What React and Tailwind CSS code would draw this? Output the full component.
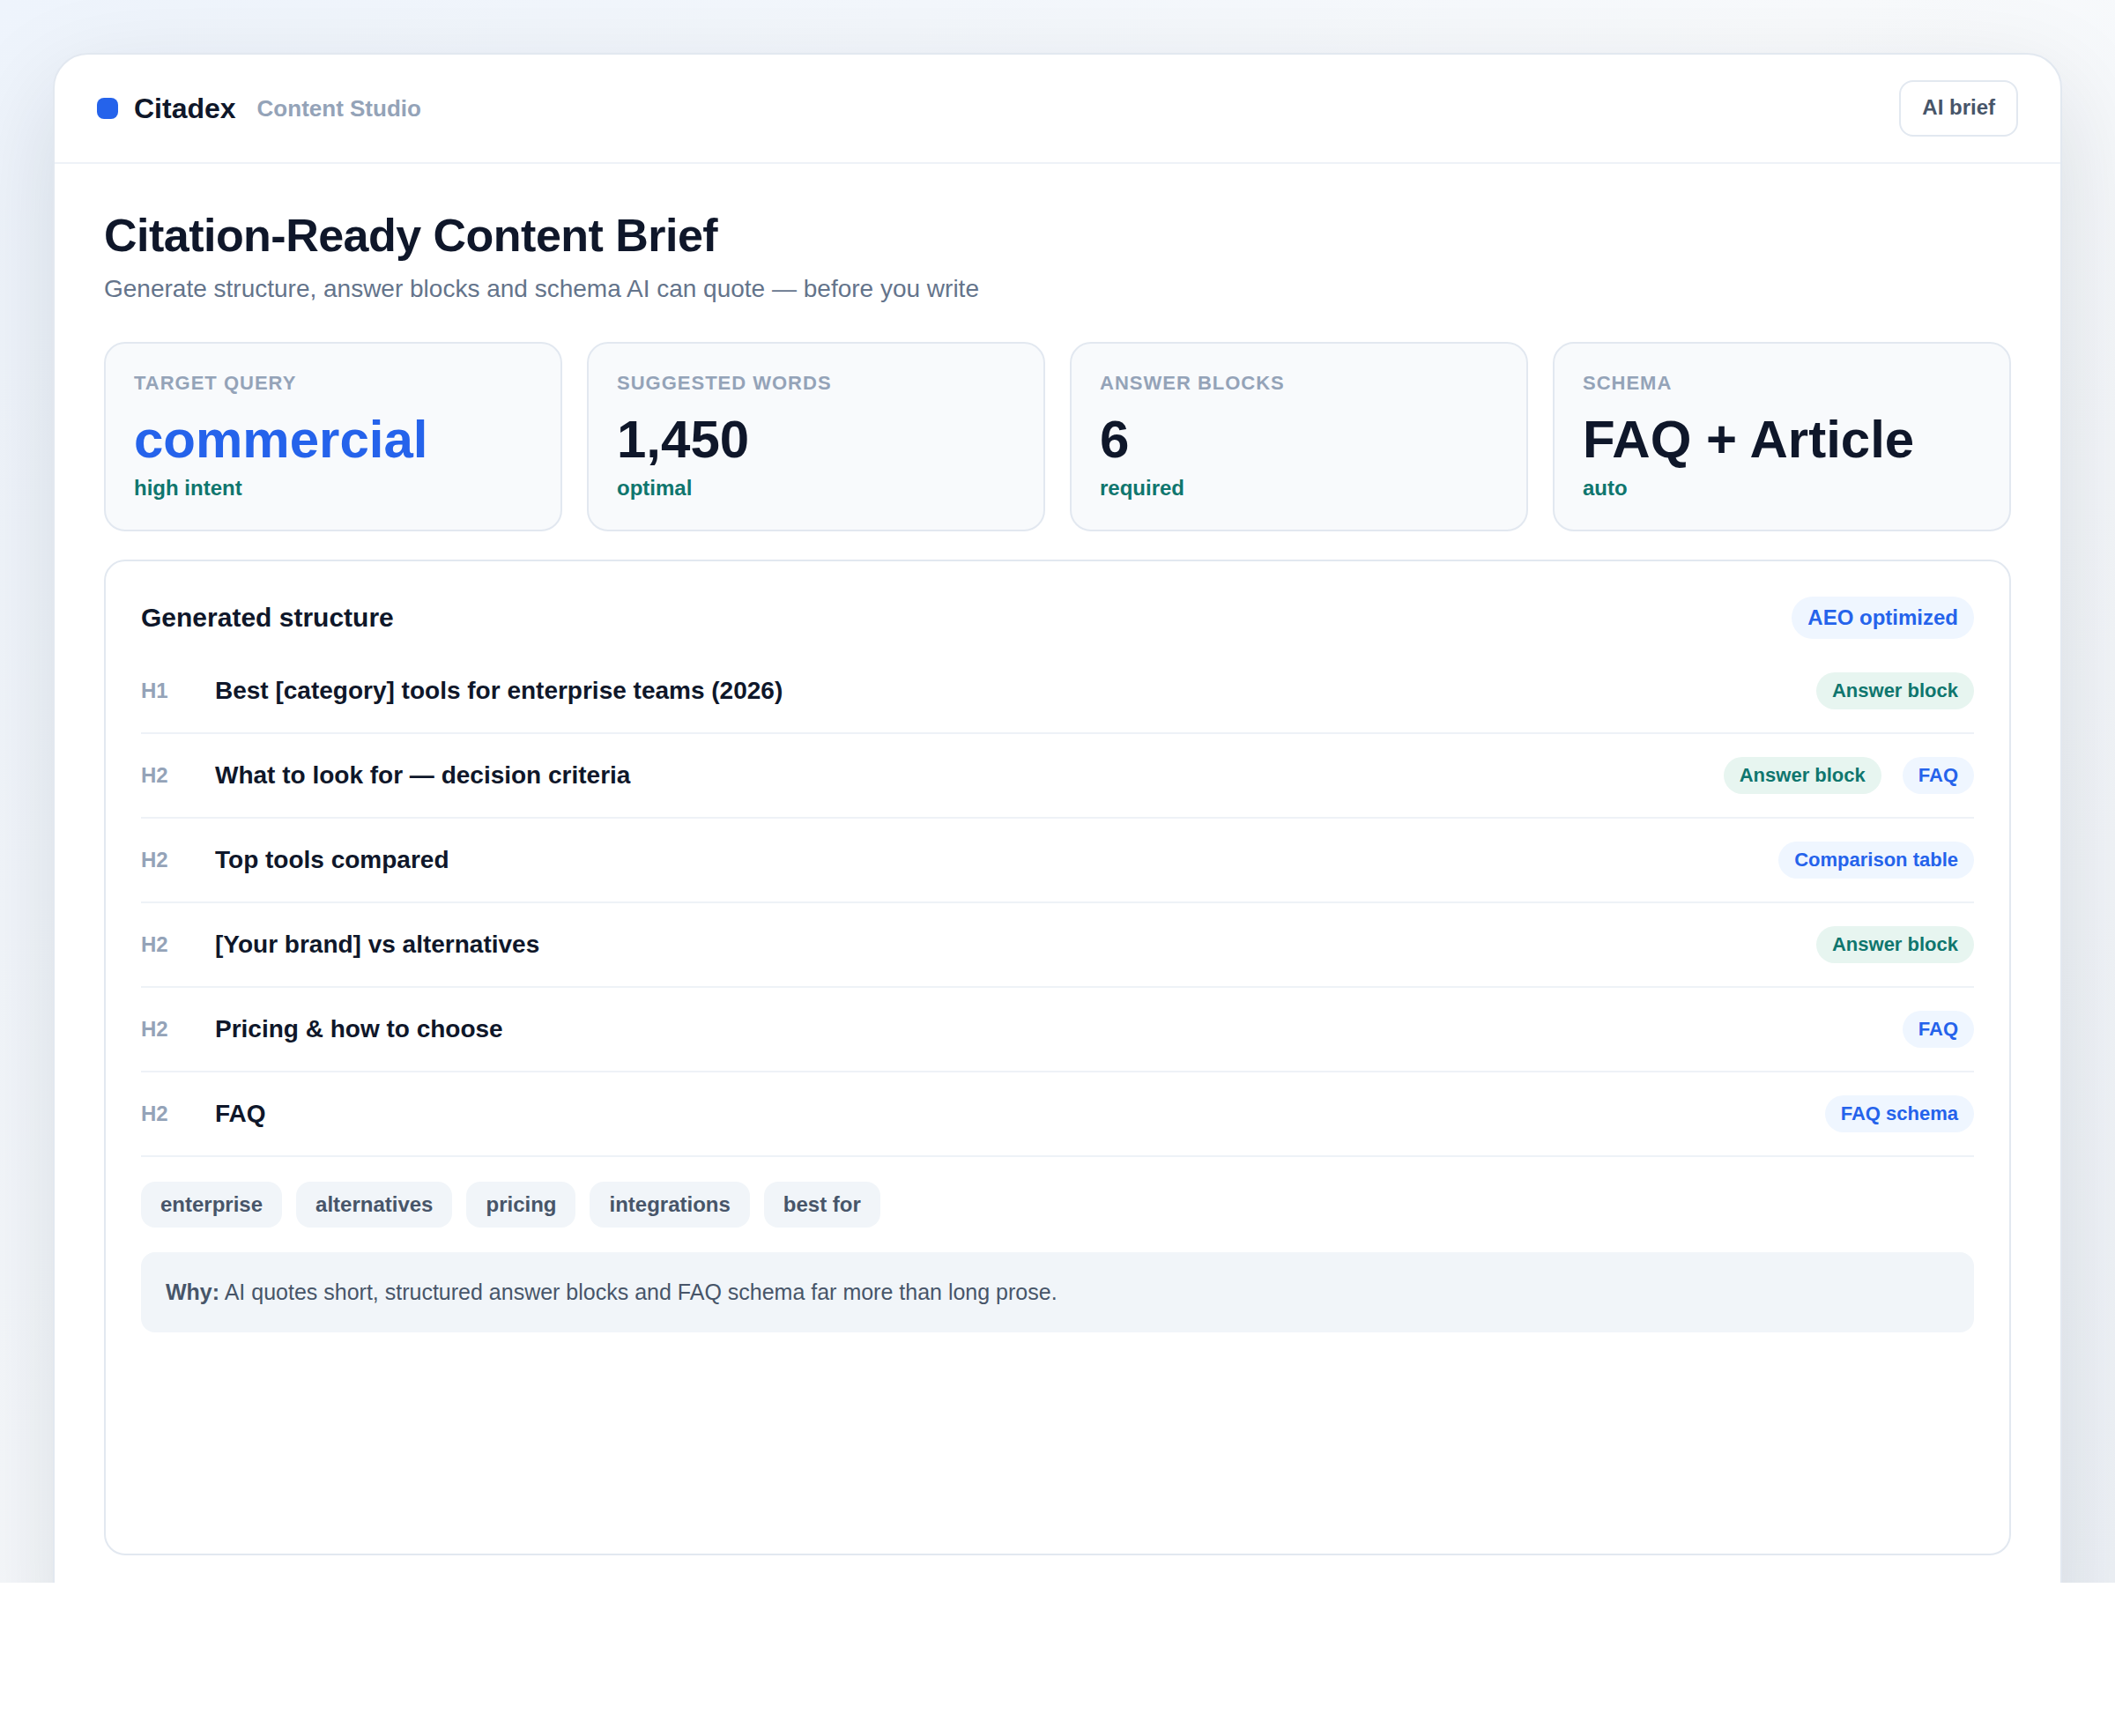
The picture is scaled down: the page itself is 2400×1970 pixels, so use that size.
const stats = [
    { label: "Target query", value: "commercial", note: "high intent", accent: true },
    { label: "Suggested words", value: "1,450", note: "optimal" },
    { label: "Answer blocks", value: "6", note: "required" },
    { label: "Schema", value: "FAQ + Article", note: "auto" },
];

const outline = [
    { level: "H1", title: "Best [category] tools for enterprise teams (2026)", tags: ["Answer block"] },
    { level: "H2", title: "What to look for — decision criteria", tags: ["Answer block", "FAQ"] },
    { level: "H2", title: "Top tools compared", tags: ["Comparison table"] },
    { level: "H2", title: "[Your brand] vs alternatives", tags: ["Answer block"] },
    { level: "H2", title: "Pricing & how to choose", tags: ["FAQ"] },
    { level: "H2", title: "FAQ", tags: ["FAQ schema"] },
];

const keywords = ["enterprise", "alternatives", "pricing", "integrations", "best for"];

const Header = () => (
    <header className="flex items-center justify-between px-12 py-[29px] border-b-2 border-[#eef2f7]">
        <div className="flex items-center">
            <span className="w-6 h-6 mr-[18px] rounded-lg bg-[#2563eb]" />
            <span className="text-[32px] leading-10 font-bold">Citadex</span>
            <span className="ml-6 text-[26px] leading-10 font-bold text-[#94a3b8]">Content Studio</span>
        </div>
        <button className="h-16 px-6 pb-0.5 border-2 border-[#e2e8f0] rounded-2xl text-2xl font-bold text-[#475569]">
            AI brief
        </button>
    </header>
);

const StatCard = ({ label, value, note, accent }) => (
    <div className="px-8 pt-7 pb-[29px] bg-[#f8fafc] border-2 border-[#e2e8f0] rounded-3xl">
        <div className="text-[22px] leading-[33px] font-bold uppercase tracking-[1px] text-[#94a3b8]">
            {label}
        </div>
        <div className={`mt-[13px] mb-0.5 text-[60px] leading-[70px] font-bold ${accent ? "text-[#2563eb]" : "text-[#0f172a]"}`}>
            {value}
        </div>
        <div className="text-2xl leading-9 font-bold text-[#0f766e]">{note}</div>
    </div>
);

const Tag = ({ children }) => (
    <span
        className={`px-[18px] rounded-full text-[22px] leading-[42px] font-bold whitespace-nowrap ${
            children === "Answer block" ? "bg-[#e7f5f0] text-[#0f766e]" : "bg-[#eff6ff] text-[#2563eb]"
        }`}
    >
        {children}
    </span>
);

const App = () => {
    return (
        <div className="overflow-hidden px-15 pt-15 bg-[linear-gradient(135deg,#eef4fc_0%,#f8fafc_50%,#eef2f7_100%)] font-['Liberation_Sans',Arial,sans-serif] text-[#0f172a]">
            {/* The window runs past the bottom edge and is cut off there */}
            <div className="-mb-20 pb-[109px] bg-white border-2 border-[#e2e8f0] rounded-[40px] shadow-[0_40px_120px_rgba(15,23,42,0.13)]">
                <Header />

                <main className="px-14 pt-12">
                    <h1 className="text-[52px] leading-[66px] font-bold tracking-[-0.01em]">
                        Citation-Ready Content Brief
                    </h1>
                    <p className="mt-[7px] text-[28px] leading-[42px] text-[#64748b]">
                        Generate structure, answer blocks and schema AI can quote — before you write
                    </p>

                    <div className="grid grid-cols-4 gap-7 mt-[39px]">
                        {stats.map((stat) => (
                            <StatCard key={stat.label} {...stat} />
                        ))}
                    </div>

                    <section className="mt-8 p-10 min-h-[1130px] border-2 border-[#e2e8f0] rounded-3xl">
                        <div className="flex items-center justify-between mb-3">
                            <h2 className="text-[30px] leading-10 font-bold">Generated structure</h2>
                            <span className="px-[18px] rounded-full bg-[#eff6ff] text-2xl leading-[48px] font-bold text-[#2563eb]">
                                AEO optimized
                            </span>
                        </div>

                        <ul>
                            {outline.map((row, i) => (
                                <li key={i} className="flex items-center gap-6 py-[26px] border-b-2 border-[#eef2f7]">
                                    <span className="w-15 text-2xl leading-10 font-bold text-[#94a3b8]">{row.level}</span>
                                    <span className="flex-1 text-[28px] leading-[42px] font-bold">{row.title}</span>
                                    {row.tags.map((tag) => (
                                        <Tag key={tag}>{tag}</Tag>
                                    ))}
                                </li>
                            ))}
                        </ul>

                        <div className="flex flex-wrap gap-4 mt-7">
                            {keywords.map((word) => (
                                <span
                                    key={word}
                                    className="px-[22px] rounded-2xl bg-[#f1f5f9] text-2xl leading-[52px] font-bold text-[#475569]"
                                >
                                    {word}
                                </span>
                            ))}
                        </div>

                        <p className="mt-7 px-7 py-6 rounded-2xl bg-[#f1f5f9] text-[25px] leading-[43px] text-[#475569]">
                            <strong>Why:</strong> AI quotes short, structured answer blocks and FAQ schema far more than long
                            prose.
                        </p>
                    </section>
                </main>
            </div>
        </div>
    );
};

export default App;
